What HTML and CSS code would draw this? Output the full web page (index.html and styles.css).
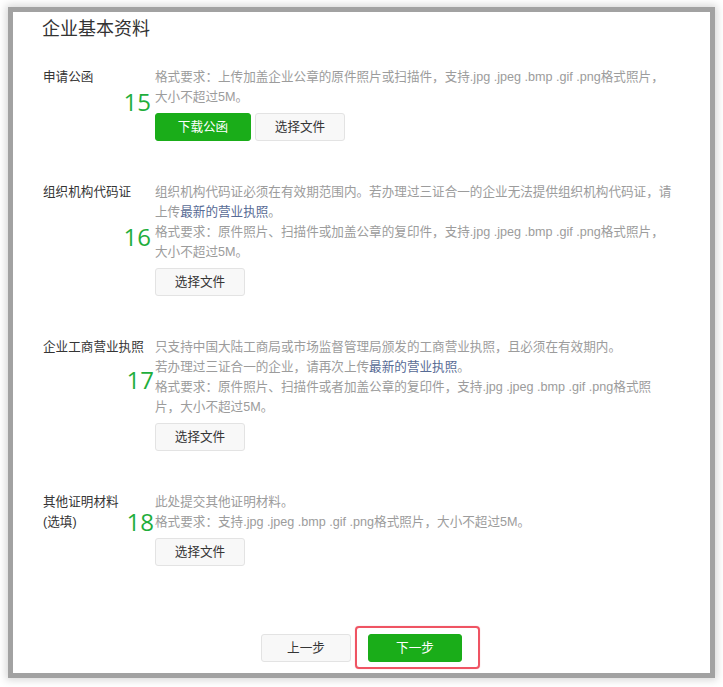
FILE: index.html
```html
<!DOCTYPE html>
<html lang="zh-CN">
<head>
<meta charset="utf-8">
<title>企业基本资料</title>
<link rel="stylesheet" href="styles.css">
</head>
<body>
<div class="panel">
  <h2 class="title">企业基本资料</h2>

  <div class="section s1">
    <div class="label">申请公函</div>
    <div class="desc">
      <span class="num n15">15</span>
      <div class="lines">格式要求：上传加盖企业公章的原件照片或扫描件，支持.jpg .jpeg .bmp .gif .png格式照片，<br>大小不超过5M。</div>
      <div class="btns">
        <button class="btn btn-green w96">下载公函</button>
        <button class="btn btn-default">选择文件</button>
      </div>
    </div>
  </div>

  <div class="section s2">
    <div class="label">组织机构代码证</div>
    <div class="desc">
      <span class="num n16">16</span>
      <div class="lines">组织机构代码证必须在有效期范围内。若办理过三证合一的企业无法提供组织机构代码证，请<br>上传<a class="link">最新的营业执照</a>。<br>格式要求：原件照片、扫描件或加盖公章的复印件，支持.jpg .jpeg .bmp .gif .png格式照片，<br>大小不超过5M。</div>
      <div class="btns">
        <button class="btn btn-default">选择文件</button>
      </div>
    </div>
  </div>

  <div class="section s3">
    <div class="label">企业工商营业执照</div>
    <div class="desc">
      <span class="num n17">17</span>
      <div class="lines">只支持中国大陆工商局或市场监督管理局颁发的工商营业执照，且必须在有效期内。<br>若办理过三证合一的企业，请再次上传<a class="link">最新的营业执照</a>。<br>格式要求：原件照片、扫描件或者加盖公章的复印件，支持.jpg .jpeg .bmp .gif .png格式照<br>片，大小不超过5M。</div>
      <div class="btns">
        <button class="btn btn-default">选择文件</button>
      </div>
    </div>
  </div>

  <div class="section s4">
    <div class="label">其他证明材料<br>(选填)</div>
    <div class="desc">
      <span class="num n18">18</span>
      <div class="lines">此处提交其他证明材料。<br>格式要求：支持.jpg .jpeg .bmp .gif .png格式照片，大小不超过5M。</div>
      <div class="btns">
        <button class="btn btn-default">选择文件</button>
      </div>
    </div>
  </div>

  <div class="footer">
    <button class="btn btn-default">上一步</button>
    <span class="next-wrap">
      <button class="btn btn-green w94">下一步</button>
      <span class="highlight"></span>
    </span>
  </div>
</div>
</body>
</html>
```

FILE: styles.css
```css
html, body {
  margin: 0;
  padding: 0;
  background: #ffffff;
}

body {
  font-family: "Liberation Sans", "Noto Sans CJK SC", sans-serif;
  font-size: 12.6px;
  color: #333333;
  width: 723px;
  height: 687px;
  overflow: hidden;
}

.panel {
  box-sizing: border-box;
  margin: 12px 13px 0 13px;
  width: 697px;
  height: 661px;
  background: #ffffff;
  padding: 5px 10px 0 30px;
  box-shadow: 0 0 0 5px #a2a2a2, 0 0 8px 7px rgba(0, 0, 0, 0.16);
}

.title {
  margin: 0 0 26px -1px;
  font-size: 18px;
  font-weight: normal;
  line-height: 24px;
  color: #333333;
}

.section {
  display: flex;
  margin-bottom: 41px;
}

.section.s4 {
  margin-bottom: 68px;
}

.label {
  width: 112px;
  flex: none;
  line-height: 20px;
  color: #353535;
}

.desc {
  position: relative;
  flex: 1;
}

.lines {
  line-height: 20px;
  color: #9c9c9c;
  white-space: nowrap;
}

.link {
  color: #576b95;
  text-decoration: none;
}

.num {
  position: absolute;
  right: 100%;
  margin-right: 4px;
  font-family: "Open Sans", "Liberation Sans", sans-serif;
  font-size: 24px;
  line-height: 24px;
  color: #1fae3c;
}

.n15 { top: 23px; }
.n16 { top: 43px; }
.n17 { top: 31px; margin-right: 1px; }
.n18 { top: 18px; margin-right: 1px; }

.btns {
  display: flex;
  gap: 4px;
  margin-top: 6px;
}

.btn {
  box-sizing: border-box;
  height: 28px;
  width: 90px;
  padding: 0;
  border-radius: 3px;
  font-family: "Liberation Sans", "Noto Sans CJK SC", sans-serif;
  font-size: 12.6px;
  line-height: 26px;
  cursor: pointer;
}

.btn-green {
  background: #1aad19;
  border: 1px solid #1aad19;
  color: #ffffff;
}

.btn-default {
  background: #f8f8f8;
  border: 1px solid #e3e3e3;
  color: #353535;
}

.w96 { width: 96px; }
.w94 { width: 94px; }

.footer {
  display: flex;
  justify-content: center;
  gap: 17px;
  margin-left: -20px;
}

.next-wrap {
  position: relative;
  display: inline-flex;
}

.highlight {
  position: absolute;
  left: -13px;
  right: -18px;
  top: -8px;
  bottom: -7px;
  border: 2px solid rgba(236, 54, 72, 0.85);
  border-radius: 4px;
  box-shadow: 0 0 1px rgba(236, 54, 72, 0.5);
  pointer-events: none;
}
```
